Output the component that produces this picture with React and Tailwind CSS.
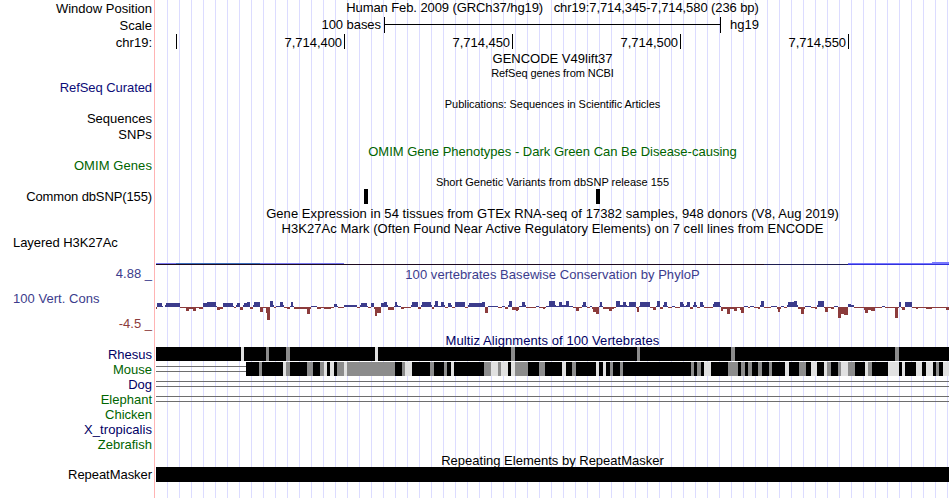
import React from 'react';

// the data area starts at this x, all positions below are in image pixels
const LEFT = 156;
const WIDTH = 793;

const labels = [
  { text: 'Window Position', cls: 'mt-px' },
  { text: 'Scale', cls: 'mt-[2px]' },
  { text: 'chr19:', cls: 'mt-[2px]' },
  { text: 'RefSeq Curated', cls: 'mt-[30px] text-[#0c0c78] tracking-[-0.07px]' },
  { text: 'Sequences', cls: 'mt-4' },
  { text: 'SNPs', cls: 'mt-px tracking-[0.15px]' },
  { text: 'OMIM Genes', cls: 'mt-4 text-[#006400] tracking-[0.08px]' },
  { text: 'Common dbSNP(155)', cls: 'mt-4 tracking-[-0.12px]' },
  { text: 'Layered H3K27Ac', cls: 'mt-[31px] self-start ml-[13px] tracking-[-0.05px]' },
  { text: '4.88 _', cls: 'mt-4 text-[#3c3c8c]' },
  { text: '100 Vert. Cons', cls: 'mt-[10px] self-start ml-[13px] text-[#3c3c8c] tracking-[0.04px]' },
  { text: '-4.5 _', cls: 'mt-[10px] text-[#8c3c3c]' },
  { text: 'Rhesus', cls: 'mt-4 text-[#000064]' },
  { text: 'Mouse', cls: 'text-[#006400]' },
  { text: 'Dog', cls: 'text-[#000064]' },
  { text: 'Elephant', cls: 'text-[#006400]' },
  { text: 'Chicken', cls: 'text-[#006400]' },
  { text: 'X_tropicalis', cls: 'text-[#000064] tracking-[0.06px]' },
  { text: 'Zebrafish', cls: 'text-[#006400]' },
  { text: 'RepeatMasker', cls: 'mt-[15px] tracking-[-0.05px]' },
];

// [end x, height] runs, positive is conserved and negative is fast evolving
const phyloP = [
  [157, -2], [162, 4], [163, 1], [165, 0], [166, 2], [180, 4], [186, -1], [189, -4], [193, -2], [196, -4],
  [199, -1], [203, -2], [207, 4], [216, 5], [217, 1], [220, -3], [223, -2], [233, 4], [234, 1], [236, -1],
  [237, 2], [240, 4], [243, -3], [244, 2], [247, 4], [250, 5], [253, -2], [254, 2], [260, 5], [263, -5],
  [266, -1], [267, -6], [270, -13], [273, 6], [274, 2], [276, -1], [280, 1], [283, 5], [284, 2], [287, -1],
  [290, -2], [291, 1], [293, 5], [294, 1], [307, -2], [310, -7], [311, -2], [317, 1], [321, -2], [324, -1],
  [331, -2], [334, -1], [337, 3], [338, 1], [344, -1], [357, 2], [360, -1], [361, 2], [367, 4], [368, 1],
  [371, -1], [374, 4], [375, -2], [377, -9], [381, -6], [384, 4], [387, 5], [388, 2], [394, -3], [395, 1],
  [397, 5], [398, 2], [401, 1], [404, -2], [411, -1], [412, 2], [418, 5], [421, -2], [422, 2], [431, 5],
  [432, 2], [434, -2], [435, 2], [438, 6], [441, 1], [444, 5], [445, 2], [448, -1], [451, 4], [452, 2],
  [455, -1], [465, 5], [468, -1], [469, 2], [482, 4], [485, 5], [488, -6], [498, 1], [502, -1], [505, 1],
  [508, -2], [509, 2], [512, 6], [516, -3], [518, -4], [519, -3], [522, 1], [525, 5], [526, 2], [536, -1],
  [539, 1], [543, -1], [545, -2], [546, -1], [549, 1], [555, 6], [556, 2], [559, 1], [562, 5], [563, 2],
  [566, 2], [569, 6], [573, 1], [576, -1], [579, -4], [582, -1], [583, 2], [586, 5], [587, 1], [590, -1],
  [592, 1], [593, -2], [596, -5], [599, -7], [600, 1], [602, 5], [603, 1], [609, -2], [612, -4], [614, -2],
  [616, -1], [620, 6], [623, 2], [626, 5], [627, 2], [629, 1], [636, 5], [637, -1], [639, -5], [640, 1],
  [650, 5], [653, -1], [656, -3], [657, 1], [660, 6], [663, -2], [664, 2], [667, 5], [668, 1], [672, -1],
  [675, 1], [680, -1], [683, 5], [684, 3], [686, 1], [687, 2], [690, 5], [693, -2], [694, 2], [696, 5],
  [697, 2], [700, -1], [703, 5], [704, 2], [713, -1], [714, 3], [720, 5], [721, 1], [723, -4], [727, -2],
  [730, -7], [734, -2], [737, -4], [740, -1], [741, -3], [744, -6], [748, 1], [750, -1], [754, 1], [758, -1],
  [760, -2], [761, 2], [764, 6], [771, -1], [777, 1], [778, -2], [780, -5], [781, -2], [784, 1], [787, -1],
  [788, 2], [794, 5], [797, 6], [798, 2], [801, -2], [804, -7], [805, -2], [811, 1], [815, -1], [817, -2],
  [818, 2], [824, 6], [825, -1], [828, -5], [831, -1], [834, -2], [838, 1], [841, -11], [844, -7], [848, -8],
  [851, 3], [854, 2], [864, -1], [865, -3], [868, -6], [871, -3], [875, -4], [882, -1], [885, 1], [895, -1],
  [898, -11], [899, -1], [901, 5], [902, -1], [905, -3], [912, 5], [916, -1], [918, -2], [926, -1], [932, -2],
  [946, -1], [949, -3],
];

// [start, end, shade] of the mismatching stretches; g = gray, l = light
const rhesus = [
  [241, 244, 'l'], [266, 269, 'g'], [286, 290, 'g'], [375, 378, 'l'], [511, 515, 'g'], [637, 640, 'g'],
  [731, 735, 'g'], [895, 899, 'g'],
];

const mouse = [
  [259, 262, 'g'], [283, 286, 'l'], [286, 290, 'g'], [307, 313, 'g'], [320, 324, 'g'], [324, 327, 'l'],
  [330, 334, 'l'], [337, 344, 'g'], [344, 347, 'l'], [347, 395, 'g'], [402, 405, 'g'], [405, 412, 'l'],
  [430, 434, 'g'], [444, 447, 'g'], [451, 454, 'l'], [484, 491, 'g'], [491, 498, 'l'], [498, 501, 'g'],
  [501, 508, 'l'], [511, 515, 'l'], [515, 528, 'g'], [539, 545, 'g'], [562, 566, 'l'], [572, 576, 'g'],
  [596, 599, 'l'], [603, 606, 'l'], [610, 613, 'g'], [620, 623, 'g'], [691, 694, 'g'], [697, 701, 'g'],
  [704, 711, 'l'], [728, 738, 'g'], [741, 745, 'g'], [748, 752, 'g'], [758, 762, 'g'], [769, 772, 'g'],
  [785, 789, 'l'], [799, 806, 'g'], [811, 817, 'l'], [824, 827, 'l'], [827, 831, 'g'], [838, 841, 'g'],
  [841, 848, 'l'], [848, 855, 'g'], [865, 868, 'l'], [868, 872, 'g'], [888, 899, 'l'], [902, 905, 'l'],
  [916, 922, 'l'], [926, 933, 'l'], [936, 939, 'g'], [943, 949, 'l'],
];

const shades = { g: '#8c8c8c', l: '#e1e1e1' };

const Title = ({ children, className = '' }) => (
  <div className={`h-[15px] w-[793px] text-center ${className}`}>{children}</div>
);

const Wiggle = () => {
  let x = LEFT;
  return (
    <svg className="block mt-[18px]" width={WIDTH} height="23" shapeRendering="crispEdges">
      {phyloP.map(([end, v]) => {
        const start = x;
        x = end;
        return (
          <rect
            key={end}
            x={start - LEFT}
            y={v > 0 ? 7 - v : 7}
            width={end - start}
            height={Math.abs(v)}
            fill={v > 0 ? '#3c3c8c' : '#8c3c3c'}
          />
        );
      })}
    </svg>
  );
};

const Alignment = ({ from, parts }) => (
  <svg className="block mb-px" width={WIDTH} height="14" shapeRendering="crispEdges">
    {from > LEFT && (
      <>
        <rect x="0" y="4" width={from - LEFT} height="1" fill="#6e6e6e" />
        <rect x="0" y="9" width={from - LEFT} height="1" fill="#6e6e6e" />
      </>
    )}
    <rect x={from - LEFT} y="0" width={LEFT + WIDTH - from} height="14" fill="#000" />
    {parts.map(([a, b, shade]) => (
      <rect key={a} x={a - LEFT} y="0" width={b - a} height="14" fill={shades[shade]} />
    ))}
  </svg>
);

const Gap = () => (
  <div className="h-[15px] w-[793px] pt-1">
    <div className="h-1.5 border-y border-[#6e6e6e]" />
  </div>
);

const App = () => {
  return (
    <div className="flex w-[950px] h-[498px] overflow-hidden bg-white text-black font-['Liberation_Sans',Arial,sans-serif] text-[13px] leading-[15px] whitespace-pre">

      {/* LABELS */}
      <div className="flex flex-col items-end w-[154px] shrink-0 pr-[2px]">
        {labels.map((l) => (
          <div key={l.text} className={`h-[15px] shrink-0 ${l.cls}`}>{l.text}</div>
        ))}
      </div>
      <div className="w-px mr-px shrink-0 bg-[#ffb4b4]" />

      {/* TRACKS */}
      <div className="flex flex-col w-[794px] shrink-0 bg-[repeating-linear-gradient(to_right,transparent_0_11px,#dcdcff_11px_12px)]">
        <Title className="tracking-[-0.09px]">Human Feb. 2009 (GRCh37/hg19)   chr19:7,714,345-7,714,580 (236 bp)</Title>

        {/* scale bar */}
        <div className="flex h-4 mt-[2px]">
          <div className="w-[228px] pr-[3px] text-right tracking-[-0.05px]">100 bases</div>
          <div className="w-[337px] h-4 border-x border-black">
            <div className="h-2 border-b border-black" />
          </div>
          <div className="pl-[9px]">hg19</div>
        </div>

        {/* ruler */}
        <div className="flex h-[15px] mt-px">
          <div className="w-[21px] border-r border-black" />
          {['7,714,400', '7,714,450', '7,714,500', '7,714,550'].map((pos) => (
            <div key={pos} className="w-[168px] pr-[2px] pt-px text-right border-r border-black tracking-[-0.05px]">{pos}</div>
          ))}
        </div>

        <Title className="mt-[2px]">GENCODE V49lift37</Title>
        <Title className="text-[11px] tracking-[-0.07px]">RefSeq genes from NCBI</Title>
        <Title className="mt-4 text-[11px] tracking-[-0.05px]">Publications: Sequences in Scientific Articles</Title>
        <Title className="mt-8 text-[#006400]">OMIM Gene Phenotypes - Dark Green Can Be Disease-causing</Title>
        <Title className="mt-4 text-[11px]">Short Genetic Variants from dbSNP release 155</Title>

        {/* common SNPs */}
        <div className="flex h-[15px] mt-[-1px] pl-[208px] gap-[228px]">
          <div className="w-1 bg-black" />
          <div className="w-1 bg-black" />
        </div>

        <Title className="mt-[2px] tracking-[0.06px]">Gene Expression in 54 tissues from GTEx RNA-seq of 17382 samples, 948 donors (V8, Aug 2019)</Title>
        <Title className="tracking-[0.05px]">H3K27Ac Mark (Often Found Near Active Regulatory Elements) on 7 cell lines from ENCODE</Title>

        {/* H3K27Ac signal */}
        <svg className="block mt-[26px]" width={WIDTH} height="3" shapeRendering="crispEdges">
          <rect x="0" y="1" width="188" height="1" fill="#7878f0" />
          <rect x="20" y="1" width="84" height="1" fill="#3c6ebe" />
          <rect x="0" y="2" width="793" height="1" fill="#1e0a1e" />
          <rect x="608" y="2" width="84" height="1" fill="#1e1e50" />
          <rect x="692" y="1" width="101" height="1" fill="#7878ff" />
          <rect x="692" y="2" width="101" height="1" fill="#3232dc" />
          <rect x="776" y="0" width="17" height="2" fill="#7878ff" />
        </svg>

        <Title className="mt-[2px] text-[#3c3c8c] tracking-[0.05px]">100 vertebrates Basewise Conservation by PhyloP</Title>
        <Wiggle />

        <Title className="mt-[10px] text-[#000064] tracking-[0.08px]">Multiz Alignments of 100 Vertebrates</Title>
        <div className="mt-[-1px]">
          <Alignment from={156} parts={rhesus} />
          <Alignment from={246} parts={mouse} />
          <Gap />
          <Gap />
        </div>

        <Title className="mt-[46px]">Repeating Elements by RepeatMasker</Title>
        <div className="h-[15px] mt-[-1px] w-[793px] bg-black" />
      </div>
    </div>
  );
};

export default App;
